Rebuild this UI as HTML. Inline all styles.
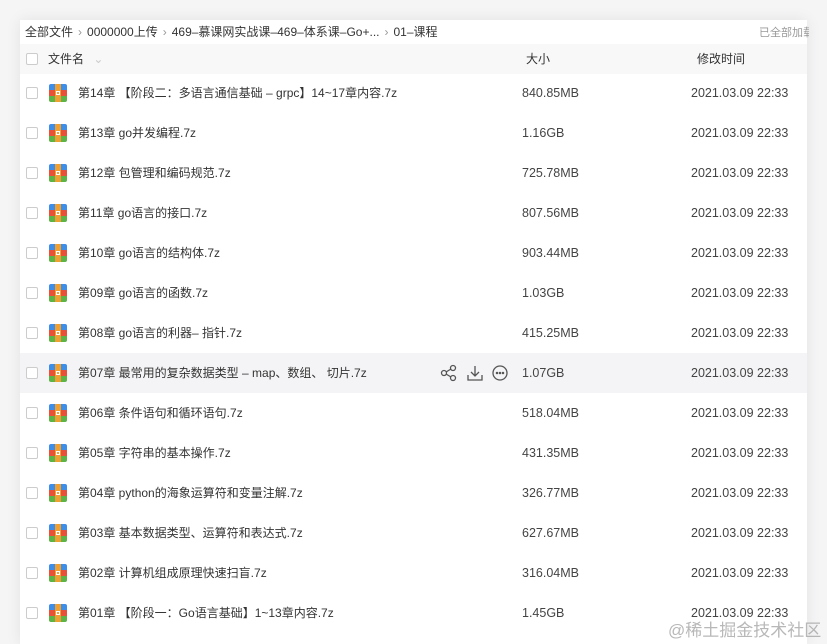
<!DOCTYPE html>
<html><head><meta charset="utf-8">
<style>
*{margin:0;padding:0;box-sizing:border-box}
body{width:827px;height:644px;background:#f5f5f6;font-family:"Liberation Sans","Noto Sans CJK SC",sans-serif;color:#333;position:relative;overflow:hidden}
.panel{position:absolute;left:20px;top:20px;width:787px;height:624px;background:#fff;box-shadow:0 0 14px rgba(0,0,0,.08)}
.crumb{position:absolute;left:5px;top:2px;font-size:12px;line-height:20px;color:#333;white-space:nowrap}
.crumb .s{color:#999;margin:0 5px}
.loaded{position:absolute;right:-2px;top:3px;font-size:11px;line-height:20px;color:#999;white-space:nowrap;width:50px;overflow:hidden}
.hdr{position:absolute;left:0;top:24px;width:787px;height:30px;background:#f8f8f9;font-size:12px;line-height:30px}
.hdr div{position:absolute;top:0}
.cb{position:absolute;left:6px;width:12px;height:12px;border:1px solid #ccc;border-radius:2px;background:#fff}
.row{position:absolute;left:0;width:787px;height:40px;font-size:12px;line-height:40px}
.row.h{background:#f4f4f6}
.ic{position:absolute;left:29px;top:11px;width:18px;height:18px;border-radius:2px;overflow:hidden}
.ic i{position:absolute;left:0;width:18px;height:6px}
.name{position:absolute;left:58px;top:0;white-space:nowrap}
.size{position:absolute;left:502px;top:0;color:#444;font-size:12.5px}
.time{position:absolute;left:671px;top:0;color:#444;font-size:12.5px}
.ops{position:absolute;left:420px;top:11px;line-height:0}
.wm{position:absolute;left:668px;top:616px;font-size:17px;color:rgba(160,160,160,.75);white-space:nowrap}
</style></head><body>
<div class="panel">
<div class="crumb">全部文件<span class="s">›</span>0000000上传<span class="s">›</span>469–慕课网实战课–469–体系课–Go+...<span class="s">›</span>01–课程</div>
<div class="loaded">已全部加载</div>
<div class="hdr">
<div class="cb" style="top:9px"></div>
<div style="left:28px">文件名 <span style="color:#ccc;margin-left:6px">⌄</span></div>
<div style="left:506px">大小</div>
<div style="left:677px">修改时间</div>
</div>
<div id="rows"></div>
</div>
<div class="wm">@稀土掘金技术社区</div>
<script>
var d=[["第14章 【阶段二：多语言通信基础 – grpc】14~17章内容.7z","840.85MB"],["第13章 go并发编程.7z","1.16GB"],["第12章 包管理和编码规范.7z","725.78MB"],["第11章 go语言的接口.7z","807.56MB"],["第10章 go语言的结构体.7z","903.44MB"],["第09章 go语言的函数.7z","1.03GB"],["第08章 go语言的利器– 指针.7z","415.25MB"],["第07章 最常用的复杂数据类型 – map、数组、 切片.7z","1.07GB"],["第06章 条件语句和循环语句.7z","518.04MB"],["第05章 字符串的基本操作.7z","431.35MB"],["第04章 python的海象运算符和变量注解.7z","326.77MB"],["第03章 基本数据类型、运算符和表达式.7z","627.67MB"],["第02章 计算机组成原理快速扫盲.7z","316.04MB"],["第01章 【阶段一：Go语言基础】1~13章内容.7z","1.45GB"]];
var h="";
d.forEach(function(r,i){
var top=53+i*40;
h+='<div class="row'+(i==7?' h':'')+'" style="top:'+top+'px"><div class="cb" style="top:14px"></div><div class="ic"><i style="top:0;background:#3d8ee8"></i><i style="top:6px;background:#e8503a"></i><i style="top:12px;background:#5cb346"></i><b style="position:absolute;left:6px;top:0;width:6px;height:18px;background:#f0a030"></b><b style="position:absolute;left:7px;top:7px;width:4px;height:4px;border:1px solid #fff"></b></div><div class="name">'+r[0]+'</div>';
if(i==7)h+='<div class="ops"><svg width="80" height="18" fill="none" stroke="#555" stroke-width="1.3"><circle cx="4" cy="9" r="2.5"/><circle cx="13" cy="4" r="2.5"/><circle cx="13" cy="14" r="2.5"/><path d="M6 8l5-3M6 10l5 3"/><path d="M35 2v10M31 8l4 4 4-4M28 11v5h14v-5"/><circle cx="60" cy="9" r="7"/><circle cx="57" cy="9" r=".6" fill="#555"/><circle cx="60" cy="9" r=".6" fill="#555"/><circle cx="63" cy="9" r=".6" fill="#555"/></svg></div>';
h+='<div class="size">'+r[1]+'</div><div class="time">2021.03.09 22:33</div></div>';
});
document.getElementById("rows").innerHTML=h;
</script>
</body></html>
